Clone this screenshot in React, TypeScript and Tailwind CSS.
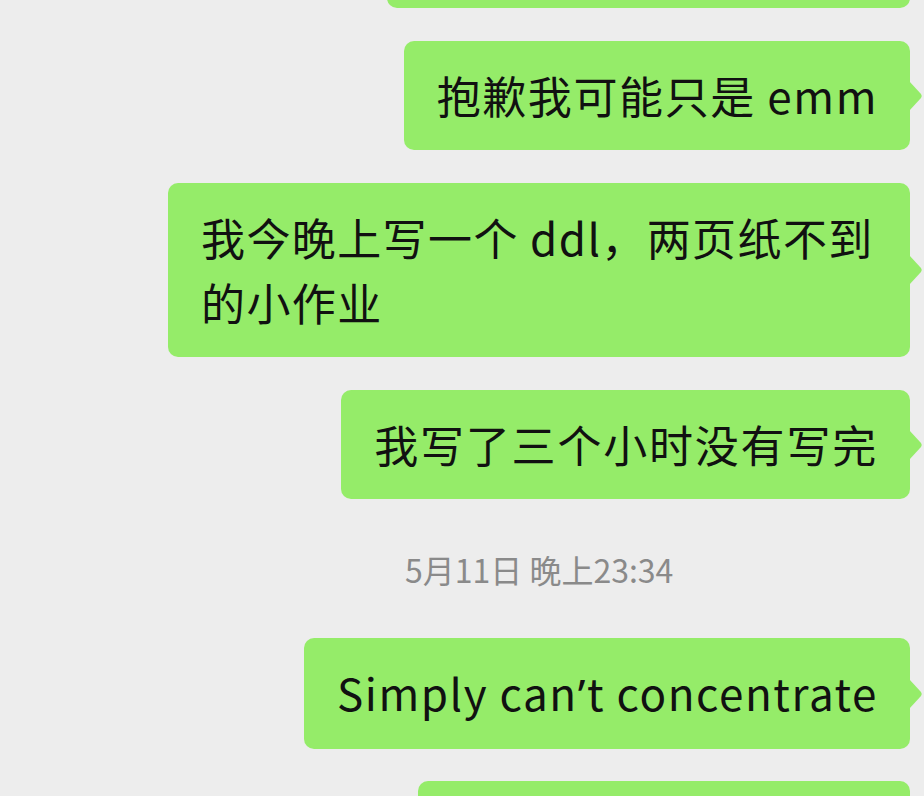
import React from "react"

const font = '"Noto Sans CJK SC", "Noto Sans", sans-serif'

function Tail() {
  return (
    <svg
      className="absolute top-1/2 -translate-y-1/2 -right-[13px]"
      width="14"
      height="32"
      viewBox="0 0 14 32"
    >
      <path d="M0 1 L12 14 Q13.5 16 12 18 L0 31 Z" fill="#95ec69" />
    </svg>
  )
}

function Bubble({ children, className = "" }: { children?: React.ReactNode; className?: string }) {
  return (
    <div
      className={
        "relative bg-[#95ec69] rounded-[10px] pl-[33px] pr-[32px] py-[22px] text-[44px] leading-[65px] text-[#111111] " +
        className
      }
    >
      {children}
      <Tail />
    </div>
  )
}

export default function App() {
  return (
    <div
      className="h-[796px] w-[924px] overflow-hidden bg-[#ededed]"
      style={{ fontFamily: font }}
    >
      <div className="flex flex-col items-end pr-[14px]">
        {/* previous bubble, cut off by the top edge */}
        <div className="-mt-[100px] h-[108px] w-[523px] rounded-[10px] bg-[#95ec69]" />

        <Bubble className="mt-[33px] tracking-[1.6px]">抱歉我可能只是 emm</Bubble>

        <Bubble className="mt-[33px] w-[742px] tracking-[1.4px]">
          我今晚上写一个 ddl，两页纸不到的小作业
        </Bubble>

        <Bubble className="mt-[33px] tracking-[1.8px]">我写了三个小时没有写完</Bubble>
      </div>

      <div className="pl-[405px] pt-[52px] pb-[50px] text-[32px] leading-[37px] text-[#8a8a8a]">
        5月11日 晚上23:34
      </div>

      <div className="flex flex-col items-end pr-[14px]">
        <Bubble className="tracking-[1.55px]">
          Simply can<span className="font-['Noto_Sans']">’</span>t concentrate
        </Bubble>
        <Bubble className="mt-[32px] w-[492px] h-[109px]" />
      </div>
    </div>
  )
}
